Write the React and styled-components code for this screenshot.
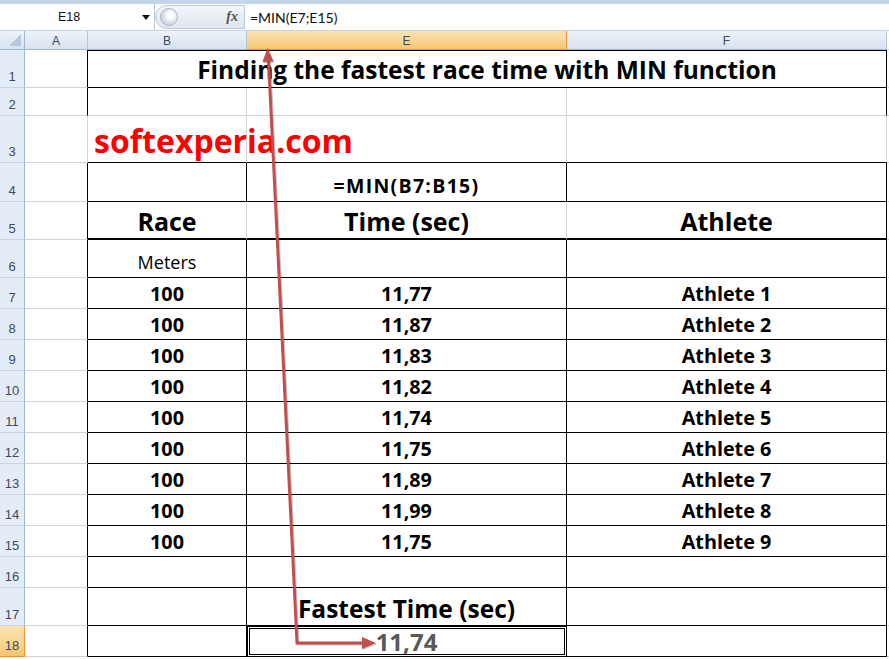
import React from "react";
import styled, { createGlobalStyle, css } from "styled-components";

const Global = createGlobalStyle`
  html, body { margin: 0; padding: 0; background: #ffffff; }
  body { width: 889px; height: 659px; overflow: hidden; font-family: "Open Sans", "Liberation Sans", sans-serif; }
  * { box-sizing: border-box; }
`;

const Page = styled.div`
  position: relative;
  width: 889px;
  height: 659px;
  overflow: hidden;
  background: #fff;
`;

const FormulaBar = styled.div`
  display: grid;
  grid-template-columns: 155px 90px 1fr;
  height: 31px;
  border-top: 4px solid #c4d5ea;
  border-bottom: 1px solid #c6d3e3;
  background: #fff;
`;

const NameBox = styled.div`
  display: flex;
  align-items: center;
  justify-content: space-between;
  padding: 0 4px 0 58px;
  font-family: "Liberation Sans", sans-serif;
  font-size: 12.5px;
  color: #111;
  border-right: 1px solid #b9c9dc;
`;

const DropArrow = styled.span`
  width: 0;
  height: 0;
  border-left: 4px solid transparent;
  border-right: 4px solid transparent;
  border-top: 5px solid #111;
`;

const FxArea = styled.div`
  display: flex;
  align-items: center;
  justify-content: space-between;
  padding: 0 6px 0 4px;
  background: linear-gradient(#f3f6fa, #dfe6ef);
  border-radius: 12px 0 0 12px;
  margin: 1px 0;
  border: 1px solid #b9c7d8;
`;

const Knob = styled.span`
  width: 18px;
  height: 18px;
  border-radius: 50%;
  background: radial-gradient(circle at 60% 40%, #ffffff 20%, #c8d3df 70%, #a7b4c3 100%);
  border: 1px solid #aab6c4;
`;

const Fx = styled.span`
  font-family: "Liberation Serif", serif;
  font-style: italic;
  font-weight: bold;
  font-size: 14px;
  color: #555;
`;

const FormulaText = styled.div`
  display: flex;
  align-items: center;
  padding-left: 5px;
  font-family: "Lato", "Liberation Sans", sans-serif;
  font-size: 14px;
  color: #111;
`;

const Sheet = styled.div`
  display: grid;
  grid-template-columns: 25px 63px 159px 320px 320px 2px;
  grid-template-rows: 19px 38px 28px 47px 39px 38px 38px repeat(9, 31px) 31px 38px 31px 10px;
`;

const headGrad = css`
  background: linear-gradient(#eef3fa 0%, #e1e9f4 55%, #d7e2ef 100%);
`;
const selGrad = css`
  background: linear-gradient(#fbe3b4 0%, #f9d592 55%, #f5c66e 100%);
`;

const Corner = styled.div`
  ${headGrad};
  border-right: 1px solid #9eb6ce;
  border-bottom: 1px solid #9eb6ce;
  position: relative;
  &::after {
    content: "";
    position: absolute;
    right: 3px;
    bottom: 3px;
    border-left: 12px solid transparent;
    border-bottom: 12px solid #b8c9de;
  }
`;

const ColHead = styled.div`
  ${(p) => (p.$sel ? selGrad : headGrad)};
  display: flex;
  align-items: center;
  justify-content: center;
  border-right: 1px solid ${(p) => (p.$sel ? "#f29436" : "#b6c6d9")};
  border-bottom: 1px solid ${(p) => (p.$sel ? "#f29436" : "#9eb6ce")};
  font-family: "Liberation Sans", sans-serif;
  font-size: 12px;
  color: #3b4a5c;
  padding-top: 1px;
`;

const RowHead = styled.div`
  ${(p) => (p.$sel ? selGrad : css`background: #e4ecf7;`)};
  display: flex;
  align-items: flex-end;
  justify-content: center;
  padding-bottom: 3px;
  border-right: 1px solid ${(p) => (p.$sel ? "#f29436" : "#9eb6ce")};
  border-bottom: 1px solid ${(p) => (p.$sel ? "#f29436" : "#c5d3e4")};
  font-family: "Liberation Sans", sans-serif;
  font-size: 13px;
  color: #3b4a5c;
`;

const Cell = styled.div`
  display: flex;
  align-items: flex-end;
  justify-content: center;
  white-space: nowrap;
  overflow: visible;
  position: relative;
  border-right: 1px solid ${(p) => (p.$r ? "#000" : "#d4d4d4")};
  border-bottom: ${(p) => p.$bw || 1}px solid ${(p) => (p.$b ? "#000" : "#d4d4d4")};
  ${(p) => p.$top && css`border-top: 1px solid #000;`}
  grid-column: ${(p) => p.$span || "auto"};
  padding-bottom: ${(p) => p.$pb ?? 2}px;
  font-family: "Open Sans", "Liberation Sans", sans-serif;
  font-weight: 700;
  font-size: ${(p) => p.$fs || 19.8}px;
  letter-spacing: ${(p) => p.$ls || 0}px;
  line-height: 1;
  color: ${(p) => p.$color || "#000"};
  ${(p) => p.$light && css`font-weight: 400;`}
  ${(p) => p.$selected && css`outline: 3px double #000; outline-offset: -3px;`}
`;

const Overflow = styled.span`
  position: absolute;
  left: 6px;
  bottom: 5px;
`;

const Filler = styled.div`
  border-bottom: 1px solid #d4d4d4;
`;

const ArrowLayer = styled.svg`
  position: absolute;
  left: 0;
  top: 0;
  pointer-events: none;
`;

const times = ["11,77", "11,87", "11,83", "11,82", "11,74", "11,75", "11,89", "11,99", "11,75"];

export default function App() {
  const rowHead = (n, sel) => <RowHead key={"rh" + n} $sel={sel}>{n}</RowHead>;
  const aCell = (n, black) => <Cell key={"a" + n} $r={black} />;

  const dataRows = times.map((t, i) => {
    const n = 7 + i;
    return (
      <React.Fragment key={n}>
        {rowHead(n)}
        {aCell(n, true)}
        <Cell $r $b $pb={4}>100</Cell>
        <Cell $r $b $pb={4}>{t}</Cell>
        <Cell $r $b $pb={4}>Athlete {i + 1}</Cell>
        <Filler />
      </React.Fragment>
    );
  });

  return (
    <Page>
      <Global />
      <FormulaBar>
        <NameBox>
          <span>E18</span>
          <DropArrow />
        </NameBox>
        <FxArea>
          <Knob />
          <Fx>fx</Fx>
        </FxArea>
        <FormulaText>=MIN(E7;E15)</FormulaText>
      </FormulaBar>
      <Sheet>
        <Corner />
        <ColHead>A</ColHead>
        <ColHead>B</ColHead>
        <ColHead $sel>E</ColHead>
        <ColHead>F</ColHead>
        <Filler />

        {rowHead(1)}
        {aCell(1, true)}
        <Cell $span="span 3" $r $b $top $fs={24.5} $pb={5}>
          Finding the fastest race time with MIN function
        </Cell>
        <Filler />

        {rowHead(2)}
        {aCell(2, true)}
        <Cell />
        <Cell />
        <Cell $r />
        <Filler />

        {rowHead(3)}
        {aCell(3, false)}
        <Cell $b $fs={32} $color="#ff0000">
          <Overflow>softexperia.com</Overflow>
        </Cell>
        <Cell $b />
        <Cell $b />
        <Filler />

        {rowHead(4)}
        {aCell(4, true)}
        <Cell $r $b />
        <Cell $r $b $fs={19.5} $ls={1.3} $pb={6}>=MIN(B7:B15)</Cell>
        <Cell $r $b />
        <Filler />

        {rowHead(5)}
        {aCell(5, true)}
        <Cell $b $bw={2} $fs={25} $pb={4}>Race</Cell>
        <Cell $b $bw={2} $fs={25} $pb={4}>Time (sec)</Cell>
        <Cell $r $b $bw={2} $fs={25} $pb={4}>Athlete</Cell>
        <Filler />

        {rowHead(6)}
        {aCell(6, true)}
        <Cell $r $b $light $fs={18} $pb={6}>Meters</Cell>
        <Cell $r $b />
        <Cell $r $b />
        <Filler />

        {dataRows}

        {rowHead(16)}
        {aCell(16, true)}
        <Cell $r $b />
        <Cell $r $b />
        <Cell $r $b />
        <Filler />

        {rowHead(17)}
        {aCell(17, true)}
        <Cell $r $b />
        <Cell $r $b $fs={24.5} $pb={4}>Fastest Time (sec)</Cell>
        <Cell $r $b />
        <Filler />

        {rowHead(18, true)}
        {aCell(18, true)}
        <Cell $r $b />
        <Cell $r $b $selected $fs={24} $color="#595959" $pb={2}>11,74</Cell>
        <Cell $r $b />
        <Filler />
      </Sheet>

      <ArrowLayer width="889" height="659" viewBox="0 0 889 659">
        <defs>
          <filter id="sh" x="-10%" y="-10%" width="120%" height="120%">
            <feDropShadow dx="1" dy="1" stdDeviation="0.6" floodColor="#000" floodOpacity="0.25" />
          </filter>
        </defs>
        <g filter="url(#sh)" stroke="#c0504d" fill="none" strokeWidth="3" strokeLinejoin="miter">
          <polyline points="268.5,60 297,643 364,643" />
        </g>
        <g filter="url(#sh)" fill="#c0504d">
          <polygon points="267.5,48 262.5,62 273.5,61.5" />
          <polygon points="376,643 362,637 362,649" />
        </g>
      </ArrowLayer>
    </Page>
  );
}
